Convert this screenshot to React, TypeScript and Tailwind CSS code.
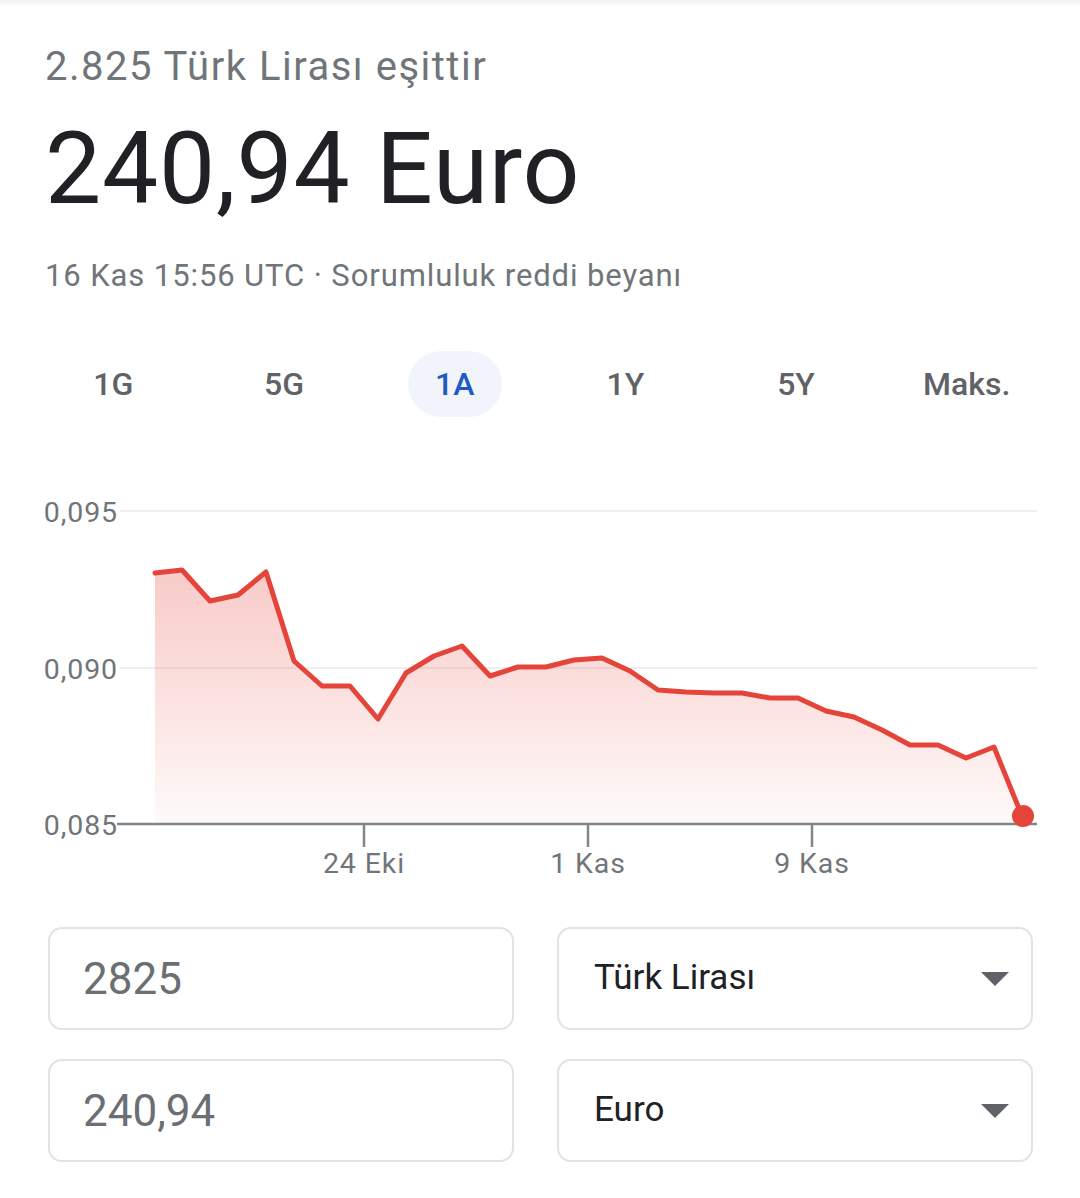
import React from "react";

const pts: [number, number][] = [
  [155, 573], [182, 570], [210, 601], [238, 595], [266, 572], [294, 661], [322, 686], [350, 686],
  [378, 719], [406, 673], [434, 656], [462, 646], [490, 676], [518, 667], [546, 667], [574, 660],
  [602, 658], [630, 671], [658, 690], [686, 692], [714, 693], [742, 693], [770, 698], [798, 698],
  [826, 711], [854, 717], [882, 730], [910, 745], [938, 745], [966, 758], [994, 747], [1022, 816],
];

const OY = 420;

function Chart() {
  const line = pts.map(([x, y], i) => `${i ? "L" : "M"}${x} ${y - OY}`).join(" ");
  const area = `${line} L1022 ${824 - OY} L155 ${824 - OY} Z`;
  const yl = [
    { t: "0,095", y: 522 },
    { t: "0,090", y: 679 },
    { t: "0,085", y: 835 },
  ];
  const xl = [
    { t: "24 Eki", x: 364 },
    { t: "1 Kas", x: 588 },
    { t: "9 Kas", x: 812 },
  ];
  return (
    <svg width={1080} height={480} viewBox="0 0 1080 480" className="block">
      <defs>
        <linearGradient id="g" x1="0" y1="0" x2="0" y2="1">
          <stop offset="0%" stopColor="#e5443a" stopOpacity="0.28" />
          <stop offset="100%" stopColor="#e5443a" stopOpacity="0.03" />
        </linearGradient>
      </defs>
      <line x1={120} x2={1037} y1={511 - OY} y2={511 - OY} stroke="#efefef" strokeWidth={2} />
      <line x1={120} x2={1037} y1={668 - OY} y2={668 - OY} stroke="#efefef" strokeWidth={2} />
      <path d={area} fill="url(#g)" />
      <line x1={117} x2={1037} y1={824 - OY} y2={824 - OY} stroke="#80868b" strokeWidth={2.5} />
      {xl.map((l) => (
        <line key={l.t} x1={l.x} x2={l.x} y1={824 - OY} y2={847 - OY} stroke="#80868b" strokeWidth={2.5} />
      ))}
      <path d={line} fill="none" stroke="#e5443a" strokeWidth={5} strokeLinejoin="round" strokeLinecap="round" />
      <circle cx={1023} cy={816 - OY} r={11} fill="#e5443a" />
      {yl.map((l) => (
        <text key={l.t} x={118} y={l.y - OY} textAnchor="end" fontSize={28.5} letterSpacing={0.9} fill="#70757a" fontFamily="Roboto, sans-serif">
          {l.t}
        </text>
      ))}
      {xl.map((l) => (
        <text key={l.t} x={l.x} y={873 - OY} textAnchor="middle" fontSize={28.5} letterSpacing={0.9} fill="#70757a" fontFamily="Roboto, sans-serif">
          {l.t}
        </text>
      ))}
    </svg>
  );
}

function Tri() {
  return (
    <svg width={28} height={14} viewBox="0 0 28 14">
      <path d="M0 0 H28 L14 14 Z" fill="#5f6368" />
    </svg>
  );
}

export default function App() {
  const tabs = ["1G", "5G", "1A", "1Y", "5Y", "Maks."];
  return (
    <div className="w-[1080px] h-[1198px] bg-white font-['Roboto',sans-serif] overflow-hidden">
      <div className="h-[8px] bg-gradient-to-b from-[#f2f2f2] to-white" />
      <div className="pl-[45px]">
        <p className="mt-[36px] text-[40px] leading-[46px] tracking-[1.5px] text-[#70757a]">2.825 Türk Lirası eşittir</p>
        <p className="mt-[24px] text-[100px] leading-[110px] text-[#202124] tracking-[0.8px]">240,94 Euro</p>
        <p className="mt-[32px] text-[31px] leading-[40px] tracking-[0.9px] text-[#70757a]">16 Kas 15:56 UTC · Sorumluluk reddi beyanı</p>
      </div>
      <div className="mt-[55px] px-[28px] grid grid-cols-6">
        {tabs.map((t) => (
          <div key={t} className="flex justify-center">
            <div
              className={
                t === "1A"
                  ? "h-[66px] w-[94px] rounded-full bg-[#f1f5fb] flex items-center justify-center text-[32px] font-medium text-[#1f5bc4]"
                  : "h-[66px] px-[10px] flex items-center justify-center text-[32px] font-medium text-[#5f6368]"
              }
            >
              {t}
            </div>
          </div>
        ))}
      </div>
      <div className="mt-[3px]">
        <Chart />
      </div>
      <div className="mt-[27px] pl-[48px] flex flex-col gap-[29px]">
        {[
          ["2825", "Türk Lirası"],
          ["240,94", "Euro"],
        ].map(([v, c]) => (
          <div key={v} className="flex gap-[43px]">
            <div className="w-[466px] h-[103px] rounded-[14px] border-2 border-[#e3e3e3] flex items-center pl-[33px] text-[44px] text-[#6b6f73]">
              {v}
            </div>
            <div className="w-[476px] h-[103px] rounded-[14px] border-2 border-[#e3e3e3] flex items-center justify-between pl-[35px] pr-[22px] text-[35px] text-[#202124]">
              <span>{c}</span>
              <Tri />
            </div>
          </div>
        ))}
      </div>
    </div>
  );
}
